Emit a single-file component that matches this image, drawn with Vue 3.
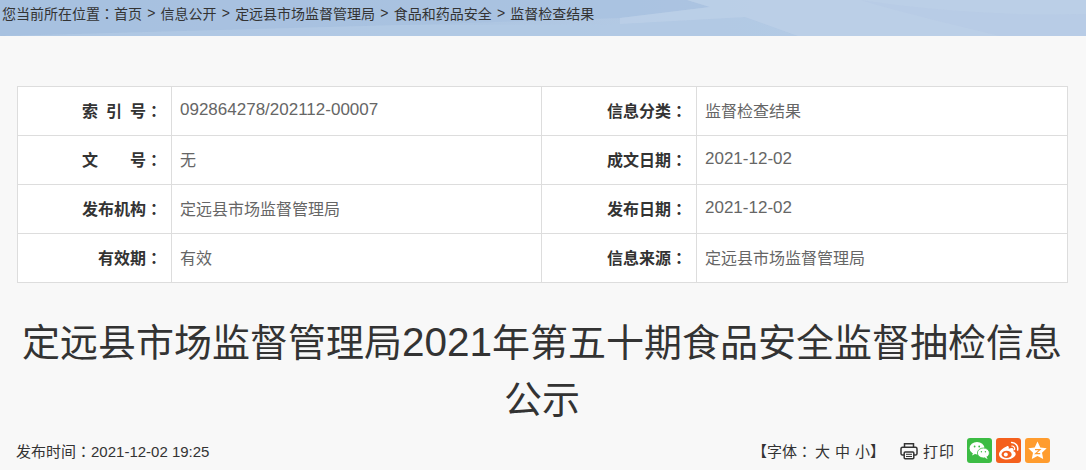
<script setup>
const rows = [
  { a: '索 引 号', av: '092864278/202112-00007', an: true, wide: true, b: '信息分类', bv: '监督检查结果' },
  { a: '文　　号', av: '无', b: '成文日期', bv: '2021-12-02', bn: true },
  { a: '发布机构', av: '定远县市场监督管理局', b: '发布日期', bv: '2021-12-02', bn: true },
  { a: '有效期', av: '有效', b: '信息来源', bv: '定远县市场监督管理局' }
]
const crumbs = ['首页', '信息公开', '定远县市场监督管理局', '食品和药品安全', '监督检查结果']
</script>

<template>
  <div class="page">
    <div class="banner">
      <svg class="banner-art" viewBox="0 0 1086 36" preserveAspectRatio="none" aria-hidden="true">
        <path d="M0 0H687L710 7L620 18L400 25L0 36Z" fill="#a6c0df" opacity=".7" />
        <path d="M0 36L400 25L620 24L745 17L798 36Z" fill="#b2c9e4" opacity=".85" />
        <path d="M620 18L710 7L687 0H1086V36H798L745 17L620 24Z" fill="#bbcfe7" opacity=".8" />
        <path d="M860 0C940 12 1020 16 1086 14V36H1000C950 24 900 12 860 0Z" fill="#b6cbe5" opacity=".7" />
      </svg>
      <div class="crumbs">
        <span>您当前所在位置<span class="colon">：</span></span>
        <template v-for="(c, i) in crumbs" :key="c">
          <span v-if="i" class="sep">&gt;</span><span>{{ c }}</span>
        </template>
      </div>
    </div>

    <main class="content">
      <table class="meta">
        <colgroup>
          <col class="c1" /><col class="c2" /><col class="c3" /><col class="c4" />
        </colgroup>
        <tbody>
          <tr v-for="(r, i) in rows" :key="i">
            <th :class="{ wide: r.wide }">{{ r.a }}<span class="colon">：</span></th>
            <td :class="{ num: r.an }">{{ r.av }}</td>
            <th>{{ r.b }}<span class="colon">：</span></th>
            <td :class="{ num: r.bn }">{{ r.bv }}</td>
          </tr>
        </tbody>
      </table>

      <h1 class="title">定远县市场监督管理局<span class="year">2021</span>年第五十期食品安全监督抽检信息公示</h1>

      <div class="foot">
        <span class="time">发布时间<span class="colon">：</span>2021-12-02 19:25</span>
        <div class="tools">
          <span class="font-size">【字体<span class="colon">：</span><span class="size">大</span><span class="size">中</span><span class="size">小</span>】</span>
          <span class="print">
            <svg width="18" height="18" viewBox="0 0 18 18" fill="none" stroke="#333" stroke-width="1.5" aria-hidden="true">
              <path d="M4.5 5V1.8h9V5" />
              <path d="M4 13H2.6A1.6 1.6 0 0 1 1 11.4V6.8A1.6 1.6 0 0 1 2.6 5.2h12.8A1.6 1.6 0 0 1 17 6.8v4.6a1.6 1.6 0 0 1-1.6 1.6H14" />
              <rect x="4.2" y="10" width="9.6" height="6.8" rx="1" />
              <path d="M6 12.3h6M6 14.5h6" stroke-width="1" />
            </svg>
            打印
          </span>
          <div class="share">
            <span class="ico wx">
              <svg width="25" height="25" viewBox="0 0 25 25" aria-hidden="true">
                <ellipse cx="10" cy="10.2" rx="7.4" ry="6.2" fill="#fff" />
                <path d="M6 14.5l-.8 3 3.2-1.8z" fill="#fff" />
                <ellipse cx="16.4" cy="15" rx="6" ry="5" fill="#fff" stroke="#3cbc44" stroke-width=".8" />
                <path d="M19.5 18.8l1.2 2.4-3.2-1.6z" fill="#fff" />
                <circle cx="7.6" cy="8.5" r=".9" fill="#3cbc44" />
                <circle cx="12.2" cy="8.5" r=".9" fill="#3cbc44" />
                <circle cx="14.4" cy="13.8" r=".7" fill="#3cbc44" />
                <circle cx="18.4" cy="13.8" r=".7" fill="#3cbc44" />
              </svg>
            </span>
            <span class="ico wb">
              <svg width="25" height="25" viewBox="0 0 25 25" aria-hidden="true">
                <path d="M10.5 8.5C6.6 10.2 3 13.5 3 16.4 3 19.5 7 21.4 11 21.4c5 0 8.7-3 8.7-5.4 0-1.7-1.5-2.4-2.3-2.7.4-1.1.5-2.3-.4-2.9-1-.7-2.7-.4-4.3.4.3-1.3.2-2.2-.4-2.6-.4-.2-.9-.2-1.8.3z" fill="#fff" />
                <ellipse cx="10.6" cy="16.4" rx="5" ry="3.6" fill="#f4601d" />
                <circle cx="9.8" cy="16.6" r="2" fill="#fff" />
                <path d="M15.6 4.6a6 6 0 0 1 6 7.4" fill="none" stroke="#fff" stroke-width="1.5" stroke-linecap="round" />
                <path d="M15.8 8a2.8 2.8 0 0 1 2.8 3.6" fill="none" stroke="#fff" stroke-width="1.2" stroke-linecap="round" />
              </svg>
            </span>
            <span class="ico qz">
              <svg width="25" height="25" viewBox="0 0 25 25" aria-hidden="true">
                <path d="M12.5 3.6l2.8 5.9 6.4.8-4.7 4.4 1.2 6.4-5.7-3.1-5.7 3.1 1.2-6.4-4.7-4.4 6.4-.8z" fill="#fff" />
                <path d="M10 11.6h5l-4.4 4h4.6" fill="none" stroke="#ff9c2e" stroke-width="1.2" />
              </svg>
            </span>
          </div>
        </div>
      </div>
    </main>
  </div>
</template>

<style>
html, body { margin: 0; background: #f8f8f8; }
</style>

<style scoped>
.page {
  width: 1086px;
  height: 470px;
  overflow: hidden;
  background: #f8f8f8;
  font-family: "Liberation Sans", "Noto Sans CJK SC", sans-serif;
  color: #333;
}
.colon { font-family: "Noto Sans CJK TC", sans-serif; }
.banner {
  position: relative;
  height: 36px;
  background: linear-gradient(90deg, #a7c1df 0%, #aec6e2 45%, #b9cde6 75%, #b8cce5 100%);
}
.banner-art {
  position: absolute;
  inset: 0;
  width: 100%;
  height: 100%;
}
.crumbs {
  position: relative;
  display: flex;
  align-items: center;
  height: 26px;
  padding-left: 2px;
  font-size: 14px;
  color: #333;
  white-space: nowrap;
}
.sep { margin: 0 5.2px; }
.content {
  padding: 50px 19px 0 17px;
}
.meta {
  width: 1050px;
  border-collapse: collapse;
  table-layout: fixed;
  background: #fff;
  font-size: 16px;
}
.c1 { width: 154px; }
.c2 { width: 370px; }
.c3 { width: 155px; }
.c4 { width: 371px; }
.meta th, .meta td {
  height: 46px;
  padding: 0 0 2px;
  border: 1px solid #ddd;
  white-space: pre;
}
.meta th {
  padding-right: 9px;
  font-weight: 700;
  text-align: right;
  color: #333;
}
.meta th.wide { word-spacing: 3.6px; }
.meta td {
  padding-left: 8px;
  color: #666;
}
.meta td.num { font-size: 17px; }
.title {
  margin: 31px 0 0;
  font-size: 38px;
  font-weight: 400;
  line-height: 57px;
  text-align: center;
  color: #333;
}
.year { font-size: 40.5px; }
.foot {
  display: flex;
  align-items: center;
  justify-content: space-between;
  margin: 9px 0 0 -1px;
  padding-right: 17px;
  font-size: 15px;
  color: #333;
}
.tools {
  display: flex;
  align-items: center;
}
.font-size .colon { margin-right: 3px; }
.size + .size { margin-left: 5px; }
.print {
  display: flex;
  align-items: center;
  gap: 5px;
  margin-left: 15px;
  letter-spacing: 1px;
}
.share {
  display: flex;
  gap: 4px;
  margin-left: 12px;
}
.ico {
  display: block;
  width: 25px;
  height: 25px;
  border-radius: 3px;
}
.ico svg { display: block; }
.wx { background: #3cbc44; }
.wb { background: #f4601d; }
.qz { background: #ff9c2e; }
</style>
